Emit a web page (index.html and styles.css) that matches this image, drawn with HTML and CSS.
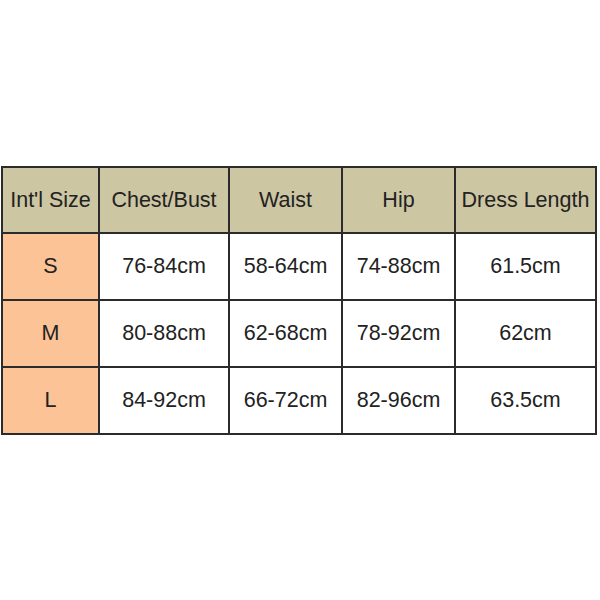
FILE: index.html
```html
<!DOCTYPE html>
<html>
<head>
<meta charset="utf-8">
<link rel="stylesheet" href="styles.css">
</head>
<body>
<div class="page">
<table class="size-table">
  <colgroup>
    <col class="c1"><col class="c2"><col class="c3"><col class="c4"><col class="c5">
  </colgroup>
  <tr class="head">
    <th>Int'l Size</th><th>Chest/Bust</th><th>Waist</th><th>Hip</th><th>Dress Length</th>
  </tr>
  <tr>
    <td class="size">S</td><td>76-84cm</td><td>58-64cm</td><td>74-88cm</td><td>61.5cm</td>
  </tr>
  <tr>
    <td class="size">M</td><td>80-88cm</td><td>62-68cm</td><td>78-92cm</td><td>62cm</td>
  </tr>
  <tr>
    <td class="size">L</td><td>84-92cm</td><td>66-72cm</td><td>82-96cm</td><td>63.5cm</td>
  </tr>
</table>
</div>
</body>
</html>
```
FILE: styles.css
```css
html, body {
  margin: 0;
  padding: 0;
  background: #ffffff;
}
.page {
  width: 600px;
  height: 600px;
  padding-top: 166px;
  padding-left: 1px;
  box-sizing: border-box;
}
.size-table {
  border-collapse: collapse;
  table-layout: fixed;
  width: 594px;
  font-family: "Liberation Sans", Arial, sans-serif;
  font-size: 21.5px;
  color: #222222;
}
.c1 { width: 97px; }
.c2 { width: 130px; }
.c3 { width: 113px; }
.c4 { width: 113px; }
.c5 { width: 141px; }
.size-table th,
.size-table td {
  border: 2px solid #2b2b2b;
  height: 65px;
  padding: 0;
  text-align: center;
  vertical-align: middle;
  font-weight: normal;
  white-space: nowrap;
}
.size-table tr.head th {
  background: #ccc6a2;
  height: 64px;
}
.size-table td.size {
  background: #fcc396;
}
```
